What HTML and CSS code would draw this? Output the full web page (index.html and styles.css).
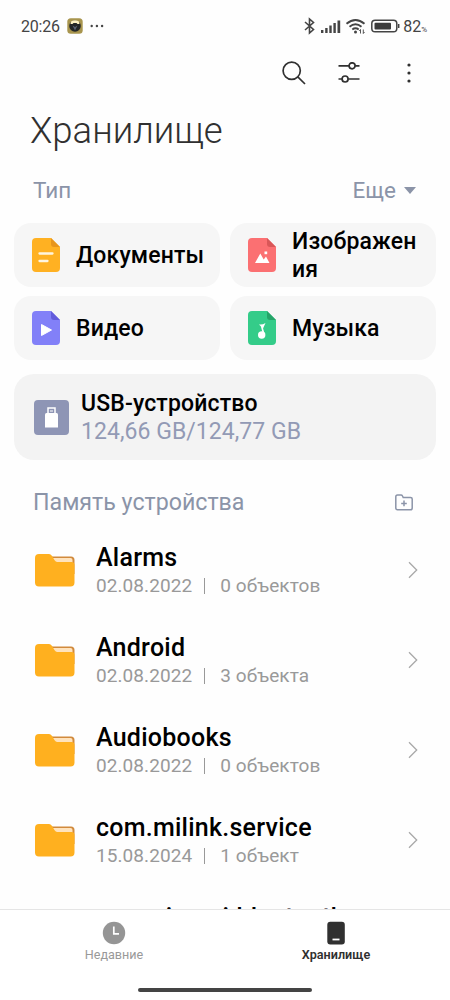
FILE: index.html
```html
<!DOCTYPE html>
<html lang="ru">
<head>
<meta charset="utf-8">
<title>Хранилище</title>
<link rel="stylesheet" href="styles.css">
</head>
<body>
<svg class="defs" width="0" height="0">
  <symbol id="folder" viewBox="0 0 40 33">
    <path d="M14 2.500H36a3.500 3.500 0 0 1 3.500 3.500V20H14z" fill="#d18a3c"/>
    <path d="M18 4H35.500a2 2 0 0 1 2 2V14H18z" fill="#ffe3bd"/>
    <path d="M4 0H13.500C16 0 17 1.500 18.500 4.500C20 7.500 21.500 8 23.500 8H36.500Q39.500 8 39.500 11V28.500Q39.500 32.500 35.500 32.500H4Q0 32.500 0 28.500V4Q0 0 4 0Z" fill="#ffb01f"/>
  </symbol>
  <symbol id="chevron" viewBox="0 0 10 18">
    <path d="M1 1.300L8.700 9L1 16.700" fill="none" stroke="#a8a8a8" stroke-width="1.300"/>
  </symbol>
</svg>
<div class="phone">
  <header class="status">
    <span class="time">20:26</span>
    <svg class="app" width="16" height="16" viewBox="0 0 16 16"><rect x=".3" y=".3" width="15.400" height="15.400" rx="3.500" fill="#a8954e"/><circle cx="8" cy="8" r="5.800" fill="#242728"/><path d="M4 3.500Q8 1 12 3.500L12.500 6H10.500L9.500 5H6.500L5.500 6H3.500z" fill="#fff3c4"/><path d="M5.500 7.500L8 12.500L10.500 7.500L8 9z" fill="#596274"/></svg>
    <svg width="14" height="4" viewBox="0 0 14 4"><g fill="#444"><circle cx="1.700" cy="2" r="1.200"/><circle cx="6.900" cy="2" r="1.200"/><circle cx="12.100" cy="2" r="1.200"/></g></svg>
    <svg class="radio" width="96" height="18" viewBox="0 0 96 18">
      <path d="M1 5L9.500 12.500L5.500 16V2L9.500 5.500L1 13" fill="none" stroke="#444" stroke-width="1.600"/>
      <g fill="#444"><rect x="17" y="13" width="2.400" height="3"/><rect x="21.200" y="11" width="2.400" height="5"/><rect x="25.300" y="8.500" width="2.400" height="7.500"/><rect x="29.400" y="6" width="2.400" height="10"/><rect x="33.500" y="3.500" width="2.700" height="12.500"/></g>
      <path d="M42.500 6.800Q51.500-.8 60.500 6.800M45.500 9.700Q51.500 4.900 57.500 9.700M48.300 12.400Q51.500 10 54.700 12.400" fill="none" stroke="#444" stroke-width="1.900"/>
      <circle cx="51.500" cy="15" r="1.500" fill="#444"/><path d="M56.500 12.500V16.500M55.300 14L56.500 12.500M59.300 12.500V16.500L60.500 15" fill="none" stroke="#444" stroke-width=".9"/>
      <rect x="67.800" y="3.200" width="25" height="11.600" rx="3.300" fill="none" stroke="#444" stroke-width="1.500"/><rect x="70.500" y="5.700" width="16.500" height="6.700" rx="1" fill="#3c3c3c"/><path d="M94.700 7v4" stroke="#444" stroke-width="1.500"/>
    </svg>
    <span class="level">82<small>%</small></span>
  </header>
  <nav class="tools">
    <svg width="24" height="24" viewBox="0 0 24 24"><circle cx="9.700" cy="9.700" r="8.600"/><path d="M15.800 15.800L23 23"/></svg>
    <svg class="filter" width="22" height="21" viewBox="0 0 22 21"><path d="M.5 3.800H11M17.200 3.800H21.500M.5 17H4M10.200 17H21.500"/><circle cx="14.100" cy="3.800" r="3"/><circle cx="7.100" cy="17" r="3"/></svg>
    <svg class="dots" width="4" height="20" viewBox="0 0 4 20"><circle cx="2" cy="2" r="1.600"/><circle cx="2" cy="10" r="1.600"/><circle cx="2" cy="18" r="1.600"/></svg>
  </nav>
  <h1 class="title">Хранилище</h1>
  <div class="section types"><span>Тип</span><span class="more">Еще <i class="caret"></i></span></div>
  <div class="grid">
    <div class="tile"><svg width="28" height="34" viewBox="0 0 28 34"><path d="M4 0H19L28 9V30a4 4 0 0 1-4 4H4a4 4 0 0 1-4-4V4a4 4 0 0 1 4-4z" fill="#ffb122"/><path d="M19 0L28 9H22Q19 9 19 6z" fill="#e7951c"/><path d="M7.500 15.500H20.500M7.500 23H15.500" stroke="#fff5df" stroke-width="2.300" stroke-linecap="round"/></svg><span>Документы</span></div>
    <div class="tile"><svg width="28" height="34" viewBox="0 0 28 34"><path d="M4 0H19L28 9V30a4 4 0 0 1-4 4H4a4 4 0 0 1-4-4V4a4 4 0 0 1 4-4z" fill="#fb7072"/><path d="M19 0L28 9H22Q19 9 19 6z" fill="#d95758"/><path d="M7 25L12.300 15.500L15.700 21.500L18 18.500L21.500 25z" fill="#fff"/><rect x="16.500" y="13.500" width="2.700" height="2.700" fill="#fff"/></svg><span>Изображен<br>ия</span></div>
    <div class="tile"><svg width="28" height="34" viewBox="0 0 28 34"><path d="M4 0H19L28 9V30a4 4 0 0 1-4 4H4a4 4 0 0 1-4-4V4a4 4 0 0 1 4-4z" fill="#8280f8"/><path d="M19 0L28 9H22Q19 9 19 6z" fill="#625bdb"/><path d="M9.500 13.500L19.500 19L9.500 24.500z" fill="#fff" stroke="#fff" stroke-linejoin="round"/></svg><span>Видео</span></div>
    <div class="tile"><svg width="28" height="34" viewBox="0 0 28 34"><path d="M4 0H19L28 9V30a4 4 0 0 1-4 4H4a4 4 0 0 1-4-4V4a4 4 0 0 1 4-4z" fill="#34cc89"/><path d="M19 0L28 9H22Q19 9 19 6z" fill="#25a468"/><circle cx="13.700" cy="24" r="3.700" fill="#fff"/><path d="M16 24L13.500 14.500" stroke="#fff" stroke-width="1.600"/><path d="M11 13.500Q14.500 14 17.500 12L15 17.500z" fill="#fff"/></svg><span>Музыка</span></div>
  </div>
  <div class="usb">
    <svg width="35" height="35" viewBox="0 0 35 35"><rect width="35" height="35" rx="4" fill="#8e95b5"/><rect x="14" y="8" width="7" height="6" fill="#8e95b5" stroke="#fff" stroke-width="1.500"/><path d="M16 11h3" stroke="#fff"/><path d="M12.500 13h10Q24 13 24 14.500V27.500H11V14.500Q11 13 12.500 13z" fill="#fff"/></svg>
    <div class="usb-info"><div class="usb-name">USB-устройство</div><div class="usb-size">124,66 GB/124,77 GB</div></div>
  </div>
  <div class="section memory"><span>Память устройства</span>
    <svg width="18" height="17" viewBox="0 0 18 17"><path d="M.8 2.800Q.8 1 2.500 1H6Q7 1 7.500 2L8.200 3.500H15.500Q17.200 3.500 17.200 5V14Q17.200 15.800 15.500 15.800H2.500Q.8 15.800.8 14zM9 6.600v5.600M6.200 9.400h5.600" fill="none" stroke="#8b94a8" stroke-width="1.500"/></svg>
  </div>
  <main class="list">
    <div class="row"><svg class="folder"><use href="#folder"/></svg><div class="info"><div class="name">Alarms</div><div class="meta"><span>02.08.2022</span><i class="bar"></i><span>0 объектов</span></div></div><svg class="chevron"><use href="#chevron"/></svg></div>
    <div class="row"><svg class="folder"><use href="#folder"/></svg><div class="info"><div class="name">Android</div><div class="meta"><span>02.08.2022</span><i class="bar"></i><span>3 объекта</span></div></div><svg class="chevron"><use href="#chevron"/></svg></div>
    <div class="row"><svg class="folder"><use href="#folder"/></svg><div class="info"><div class="name">Audiobooks</div><div class="meta"><span>02.08.2022</span><i class="bar"></i><span>0 объектов</span></div></div><svg class="chevron"><use href="#chevron"/></svg></div>
    <div class="row"><svg class="folder"><use href="#folder"/></svg><div class="info"><div class="name">com.milink.service</div><div class="meta"><span>15.08.2024</span><i class="bar"></i><span>1 объект</span></div></div><svg class="chevron"><use href="#chevron"/></svg></div>
    <div class="row"><svg class="folder"><use href="#folder"/></svg><div class="info"><div class="name">com.xiaomi.bluetooth</div></div></div>
  </main>
  <footer class="tabs">
    <div class="tab"><svg width="24" height="24" viewBox="0 0 24 24"><circle cx="12" cy="12" r="11.200" fill="#959595"/><path d="M11.800 5.500V12.800H17" fill="none" stroke="#fff" stroke-width="1.700"/></svg><span>Недавние</span></div>
    <div class="tab active"><svg width="24" height="24" viewBox="0 0 24 24"><rect x="3.300" y=".8" width="17.500" height="22.600" rx="3" fill="#303030"/><path d="M8.500 18.500h7" stroke="#fff" stroke-width="1.800"/></svg><span>Хранилище</span></div>
    <div class="home"></div>
  </footer>
</div>
</body>
</html>
```
FILE: styles.css
```css
* { box-sizing: border-box; }
body { margin: 0; background: #fff; font-family: Roboto, "Liberation Sans", sans-serif; }
.defs { display: block; height: 0; }
.phone { width: 450px; height: 1000px; display: flex; flex-direction: column; overflow: hidden; background: #fefefe; }
.phone > * { flex: none; }
.status { height: 50px; padding: 2px 23px 0 21px; display: flex; align-items: center; color: #444; font-size: 16px; }
.time { width: 39px; letter-spacing: -.2px; }
.app { margin: 0 7px; }
.radio { margin-left: auto; margin-right: 3px; }
.level small { font-size: 8px; }
.tools { height: 45px; padding: 0 39px 0 282px; display: flex; align-items: center; }
.tools svg { fill: none; stroke: #303030; stroke-width: 1.700; }
.tools .filter { margin-left: 32px; }
.tools .dots { margin-left: auto; fill: #303030; stroke: none; }
.title { margin: 0; height: 73px; padding: 14px 0 0 30px; font-size: 36.500px; line-height: 44px; font-weight: 300; color: #303030; }
.section { display: flex; align-items: center; justify-content: space-between; padding: 0 34px 0 33px; color: #8b94a8; font-size: 23.200px; }
.types { height: 55px; padding-bottom: 12px; font-size: 22.500px; }
.more { display: flex; align-items: center; }
.caret { width: 0; height: 0; margin: 2px 0 0 8px; border: 6px solid transparent; border-top: 7px solid #8b94a8; border-bottom: 0; }
.grid { display: grid; grid-template-columns: 206px 206px; grid-auto-rows: 64px; gap: 9px 10px; padding-left: 14px; }
.tile { display: flex; align-items: center; gap: 16px; padding-left: 18px; border-radius: 17px; background: #f6f6f6; font-size: 23px; line-height: 28px; font-weight: 500; letter-spacing: .15px; color: #000; }
.tile span { margin-top: 2px; }
.usb { height: 86px; width: 422px; margin: 14px 0 0 14px; padding-left: 20px; display: flex; align-items: center; gap: 12px; border-radius: 20px; background: #f3f3f3; font-size: 23px; line-height: 28px; }
.usb-info { margin-top: 1px; }
.usb-name { font-weight: 500; letter-spacing: .15px; }
.usb-size { color: #929ab5; letter-spacing: .05px; }
.memory { height: 65px; padding-top: 19px; padding-right: 37px; }
.list { height: 384px; overflow: hidden; }
.row { height: 90px; display: flex; align-items: center; padding: 0 32px 0 35px; }
.folder { width: 40px; height: 33px; margin-right: 21px; }
.info { height: 60px; flex: 1; }
.name { font-size: 25px; line-height: 35px; font-weight: 500; letter-spacing: .25px; color: #000; }
.meta { display: flex; align-items: center; font-size: 19px; line-height: 22px; letter-spacing: .08px; color: #999; }
.bar { width: 1px; height: 16px; margin: 0 15px 0 12px; background: #999; }
.chevron { width: 10px; height: 18px; }
.tabs { height: 91px; border-top: 1px solid #e5e5e5; padding: 11px 3px 0; display: grid; grid-template-columns: 1fr 1fr; grid-template-rows: 66px 6px; background: #fff; }
.tab { display: flex; flex-direction: column; align-items: center; font-size: 12.600px; line-height: 20px; color: #999; }
.active { color: #303030; font-weight: 600; }
.home { grid-column: 1 / 3; justify-self: center; width: 174px; height: 4px; margin-top: 1px; border-radius: 2px; background: #444; }
```
